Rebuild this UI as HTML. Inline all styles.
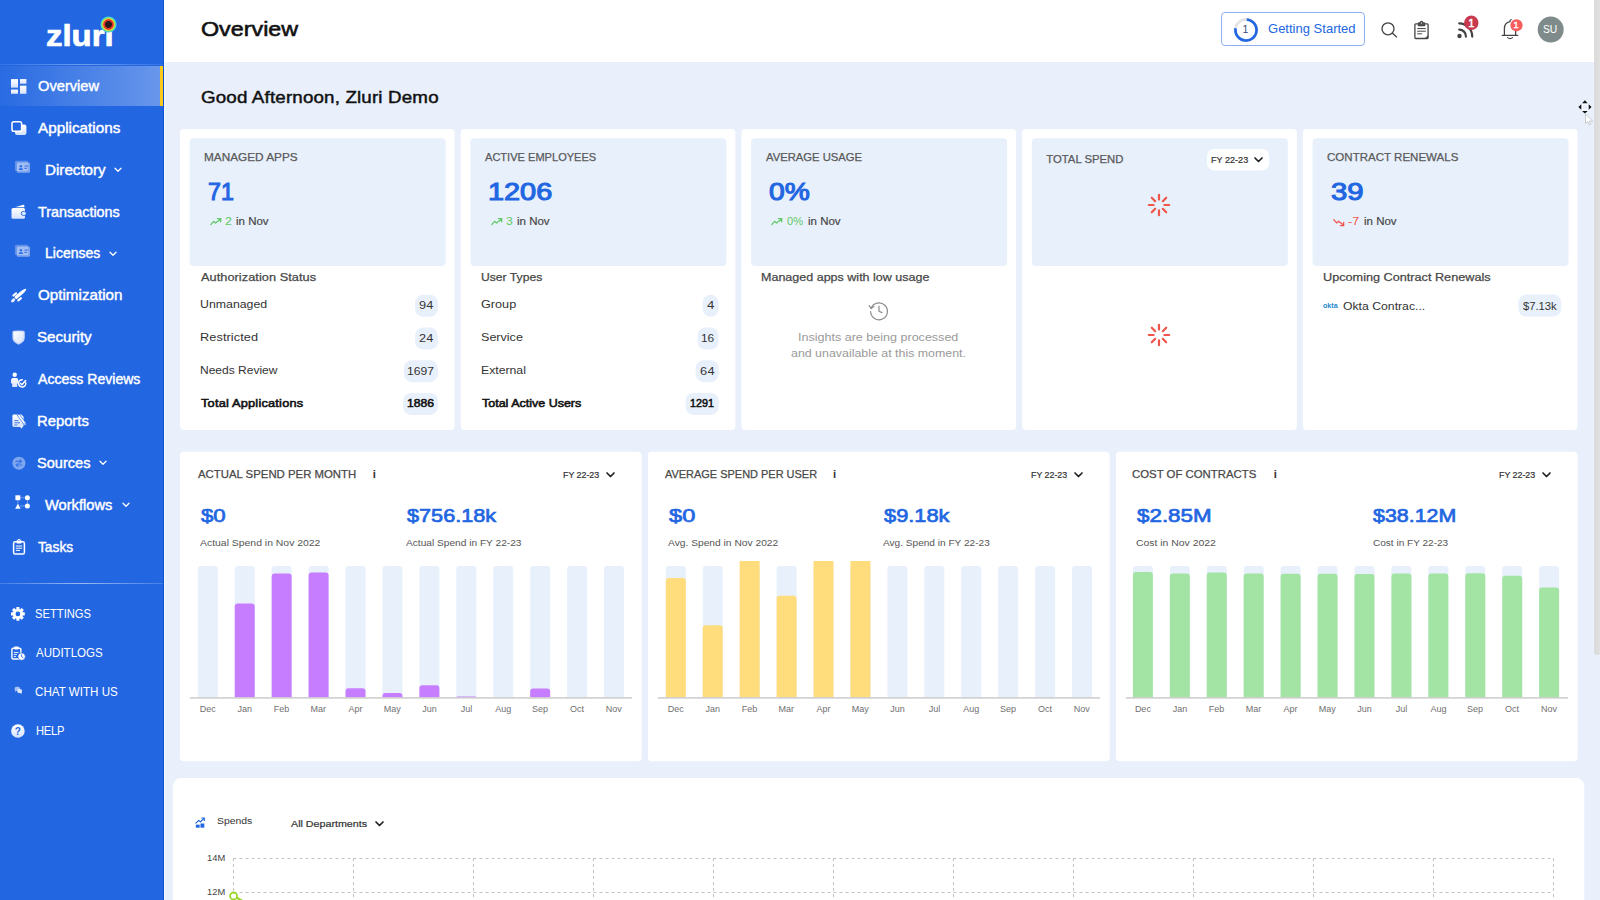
<!DOCTYPE html>
<html lang="en"><head><meta charset="utf-8"><title>Overview - Zluri</title>
<style>

*{box-sizing:border-box;margin:0;padding:0}
html,body{width:1600px;height:900px;overflow:hidden;background:#E9F0FC;font-family:"Liberation Sans", sans-serif;}
.t{position:absolute;white-space:nowrap;transform-origin:0 50%;}
.abs{position:absolute}
#side{position:absolute;left:0;top:0;width:164px;height:900px;background:#2266E2;}
#head{position:absolute;left:164px;top:0;width:1436px;height:62px;background:#fff;}
svg{position:absolute;overflow:visible}

</style></head>
<body>
<svg style="left:0;top:0" width="1600" height="900" viewBox="0 0 1600 900"><rect x="180.00" y="129.07" width="274.67" height="300.93" rx="4" fill="#fff"/><rect x="189.70" y="138.13" width="255.97" height="127.90" rx="4" fill="#E8F0FC"/><rect x="460.72" y="129.07" width="274.67" height="300.93" rx="4" fill="#fff"/><rect x="470.42" y="138.13" width="255.97" height="127.90" rx="4" fill="#E8F0FC"/><rect x="741.44" y="129.07" width="274.67" height="300.93" rx="4" fill="#fff"/><rect x="751.14" y="138.13" width="255.97" height="127.90" rx="4" fill="#E8F0FC"/><rect x="1022.16" y="129.07" width="274.67" height="300.93" rx="4" fill="#fff"/><rect x="1031.86" y="138.13" width="255.97" height="127.90" rx="4" fill="#E8F0FC"/><rect x="1302.88" y="129.07" width="274.67" height="300.93" rx="4" fill="#fff"/><rect x="1312.58" y="138.13" width="255.97" height="127.90" rx="4" fill="#E8F0FC"/><rect x="1207.06" y="149.00" width="62.20" height="21.40" rx="7" fill="#fff"/><rect x="415.10" y="294.80" width="22.80" height="22.00" rx="8" fill="#E8F0FC"/><rect x="415.10" y="327.50" width="22.80" height="22.00" rx="8" fill="#E8F0FC"/><rect x="403.90" y="360.20" width="34.00" height="22.00" rx="8" fill="#E8F0FC"/><rect x="403.10" y="392.90" width="34.80" height="22.00" rx="8" fill="#E8F0FC"/><rect x="702.62" y="294.80" width="16.00" height="22.00" rx="8" fill="#E8F0FC"/><rect x="697.62" y="327.50" width="21.00" height="22.00" rx="8" fill="#E8F0FC"/><rect x="695.62" y="360.20" width="23.00" height="22.00" rx="8" fill="#E8F0FC"/><rect x="685.62" y="392.90" width="33.00" height="22.00" rx="8" fill="#E8F0FC"/><rect x="1518.28" y="294.60" width="43.00" height="22.00" rx="8" fill="#E8F0FC"/><rect x="180.00" y="451.80" width="461.70" height="309.40" rx="4" fill="#fff"/><path d="M197.80 697.80 V569.00 Q197.80 566.00 200.80 566.00 H214.80 Q217.80 566.00 217.80 569.00 V697.80 Z" fill="#E8F0FC"/><path d="M234.73 697.80 V569.00 Q234.73 566.00 237.73 566.00 H251.73 Q254.73 566.00 254.73 569.00 V697.80 Z" fill="#E8F0FC"/><path d="M234.73 697.80 V606.60 Q234.73 603.60 237.73 603.60 H251.73 Q254.73 603.60 254.73 606.60 V697.80 Z" fill="#C77DFF"/><path d="M271.66 697.80 V569.00 Q271.66 566.00 274.66 566.00 H288.66 Q291.66 566.00 291.66 569.00 V697.80 Z" fill="#E8F0FC"/><path d="M271.66 697.80 V576.50 Q271.66 573.50 274.66 573.50 H288.66 Q291.66 573.50 291.66 576.50 V697.80 Z" fill="#C77DFF"/><path d="M308.59 697.80 V569.00 Q308.59 566.00 311.59 566.00 H325.59 Q328.59 566.00 328.59 569.00 V697.80 Z" fill="#E8F0FC"/><path d="M308.59 697.80 V575.40 Q308.59 572.40 311.59 572.40 H325.59 Q328.59 572.40 328.59 575.40 V697.80 Z" fill="#C77DFF"/><path d="M345.52 697.80 V569.00 Q345.52 566.00 348.52 566.00 H362.52 Q365.52 566.00 365.52 569.00 V697.80 Z" fill="#E8F0FC"/><path d="M345.52 697.80 V691.30 Q345.52 688.30 348.52 688.30 H362.52 Q365.52 688.30 365.52 691.30 V697.80 Z" fill="#C77DFF"/><path d="M382.45 697.80 V569.00 Q382.45 566.00 385.45 566.00 H399.45 Q402.45 566.00 402.45 569.00 V697.80 Z" fill="#E8F0FC"/><path d="M382.45 697.80 V696.00 Q382.45 693.00 385.45 693.00 H399.45 Q402.45 693.00 402.45 696.00 V697.80 Z" fill="#C77DFF"/><path d="M419.38 697.80 V569.00 Q419.38 566.00 422.38 566.00 H436.38 Q439.38 566.00 439.38 569.00 V697.80 Z" fill="#E8F0FC"/><path d="M419.38 697.80 V688.30 Q419.38 685.30 422.38 685.30 H436.38 Q439.38 685.30 439.38 688.30 V697.80 Z" fill="#C77DFF"/><path d="M456.31 697.80 V569.00 Q456.31 566.00 459.31 566.00 H473.31 Q476.31 566.00 476.31 569.00 V697.80 Z" fill="#E8F0FC"/><path d="M456.31 697.80 V697.80 Q456.31 696.60 457.51 696.60 H475.11 Q476.31 696.60 476.31 697.80 V697.80 Z" fill="#C77DFF"/><path d="M493.24 697.80 V569.00 Q493.24 566.00 496.24 566.00 H510.24 Q513.24 566.00 513.24 569.00 V697.80 Z" fill="#E8F0FC"/><path d="M530.17 697.80 V569.00 Q530.17 566.00 533.17 566.00 H547.17 Q550.17 566.00 550.17 569.00 V697.80 Z" fill="#E8F0FC"/><path d="M530.17 697.80 V691.60 Q530.17 688.60 533.17 688.60 H547.17 Q550.17 688.60 550.17 691.60 V697.80 Z" fill="#C77DFF"/><path d="M567.10 697.80 V569.00 Q567.10 566.00 570.10 566.00 H584.10 Q587.10 566.00 587.10 569.00 V697.80 Z" fill="#E8F0FC"/><path d="M604.03 697.80 V569.00 Q604.03 566.00 607.03 566.00 H621.03 Q624.03 566.00 624.03 569.00 V697.80 Z" fill="#E8F0FC"/><rect x="189.80" y="697.10" width="442.20" height="1.60" fill="#cfcfcf"/><rect x="648.00" y="451.80" width="461.70" height="309.40" rx="4" fill="#fff"/><path d="M665.80 697.80 V569.00 Q665.80 566.00 668.80 566.00 H682.80 Q685.80 566.00 685.80 569.00 V697.80 Z" fill="#E8F0FC"/><path d="M665.80 697.80 V580.90 Q665.80 577.90 668.80 577.90 H682.80 Q685.80 577.90 685.80 580.90 V697.80 Z" fill="#FFDC7C"/><path d="M702.73 697.80 V569.00 Q702.73 566.00 705.73 566.00 H719.73 Q722.73 566.00 722.73 569.00 V697.80 Z" fill="#E8F0FC"/><path d="M702.73 697.80 V628.20 Q702.73 625.20 705.73 625.20 H719.73 Q722.73 625.20 722.73 628.20 V697.80 Z" fill="#FFDC7C"/><path d="M739.66 697.80 V569.00 Q739.66 566.00 742.66 566.00 H756.66 Q759.66 566.00 759.66 569.00 V697.80 Z" fill="#E8F0FC"/><path d="M739.66 697.80 V561.00 Q739.66 561.00 739.66 561.00 H759.66 Q759.66 561.00 759.66 561.00 V697.80 Z" fill="#FFDC7C"/><path d="M776.59 697.80 V569.00 Q776.59 566.00 779.59 566.00 H793.59 Q796.59 566.00 796.59 569.00 V697.80 Z" fill="#E8F0FC"/><path d="M776.59 697.80 V598.80 Q776.59 595.80 779.59 595.80 H793.59 Q796.59 595.80 796.59 598.80 V697.80 Z" fill="#FFDC7C"/><path d="M813.52 697.80 V569.00 Q813.52 566.00 816.52 566.00 H830.52 Q833.52 566.00 833.52 569.00 V697.80 Z" fill="#E8F0FC"/><path d="M813.52 697.80 V561.00 Q813.52 561.00 813.52 561.00 H833.52 Q833.52 561.00 833.52 561.00 V697.80 Z" fill="#FFDC7C"/><path d="M850.45 697.80 V569.00 Q850.45 566.00 853.45 566.00 H867.45 Q870.45 566.00 870.45 569.00 V697.80 Z" fill="#E8F0FC"/><path d="M850.45 697.80 V561.00 Q850.45 561.00 850.45 561.00 H870.45 Q870.45 561.00 870.45 561.00 V697.80 Z" fill="#FFDC7C"/><path d="M887.38 697.80 V569.00 Q887.38 566.00 890.38 566.00 H904.38 Q907.38 566.00 907.38 569.00 V697.80 Z" fill="#E8F0FC"/><path d="M924.31 697.80 V569.00 Q924.31 566.00 927.31 566.00 H941.31 Q944.31 566.00 944.31 569.00 V697.80 Z" fill="#E8F0FC"/><path d="M961.24 697.80 V569.00 Q961.24 566.00 964.24 566.00 H978.24 Q981.24 566.00 981.24 569.00 V697.80 Z" fill="#E8F0FC"/><path d="M998.17 697.80 V569.00 Q998.17 566.00 1001.17 566.00 H1015.17 Q1018.17 566.00 1018.17 569.00 V697.80 Z" fill="#E8F0FC"/><path d="M1035.10 697.80 V569.00 Q1035.10 566.00 1038.10 566.00 H1052.10 Q1055.10 566.00 1055.10 569.00 V697.80 Z" fill="#E8F0FC"/><path d="M1072.03 697.80 V569.00 Q1072.03 566.00 1075.03 566.00 H1089.03 Q1092.03 566.00 1092.03 569.00 V697.80 Z" fill="#E8F0FC"/><rect x="657.80" y="697.10" width="442.20" height="1.60" fill="#cfcfcf"/><rect x="1116.00" y="451.80" width="461.70" height="309.40" rx="4" fill="#fff"/><path d="M1132.90 697.80 V569.00 Q1132.90 566.00 1135.90 566.00 H1149.90 Q1152.90 566.00 1152.90 569.00 V697.80 Z" fill="#E8F0FC"/><path d="M1132.90 697.80 V575.00 Q1132.90 572.00 1135.90 572.00 H1149.90 Q1152.90 572.00 1152.90 575.00 V697.80 Z" fill="#A3E4A4"/><path d="M1169.83 697.80 V569.00 Q1169.83 566.00 1172.83 566.00 H1186.83 Q1189.83 566.00 1189.83 569.00 V697.80 Z" fill="#E8F0FC"/><path d="M1169.83 697.80 V576.50 Q1169.83 573.50 1172.83 573.50 H1186.83 Q1189.83 573.50 1189.83 576.50 V697.80 Z" fill="#A3E4A4"/><path d="M1206.76 697.80 V569.00 Q1206.76 566.00 1209.76 566.00 H1223.76 Q1226.76 566.00 1226.76 569.00 V697.80 Z" fill="#E8F0FC"/><path d="M1206.76 697.80 V575.40 Q1206.76 572.40 1209.76 572.40 H1223.76 Q1226.76 572.40 1226.76 575.40 V697.80 Z" fill="#A3E4A4"/><path d="M1243.69 697.80 V569.00 Q1243.69 566.00 1246.69 566.00 H1260.69 Q1263.69 566.00 1263.69 569.00 V697.80 Z" fill="#E8F0FC"/><path d="M1243.69 697.80 V576.60 Q1243.69 573.60 1246.69 573.60 H1260.69 Q1263.69 573.60 1263.69 576.60 V697.80 Z" fill="#A3E4A4"/><path d="M1280.62 697.80 V569.00 Q1280.62 566.00 1283.62 566.00 H1297.62 Q1300.62 566.00 1300.62 569.00 V697.80 Z" fill="#E8F0FC"/><path d="M1280.62 697.80 V576.80 Q1280.62 573.80 1283.62 573.80 H1297.62 Q1300.62 573.80 1300.62 576.80 V697.80 Z" fill="#A3E4A4"/><path d="M1317.55 697.80 V569.00 Q1317.55 566.00 1320.55 566.00 H1334.55 Q1337.55 566.00 1337.55 569.00 V697.80 Z" fill="#E8F0FC"/><path d="M1317.55 697.80 V576.80 Q1317.55 573.80 1320.55 573.80 H1334.55 Q1337.55 573.80 1337.55 576.80 V697.80 Z" fill="#A3E4A4"/><path d="M1354.48 697.80 V569.00 Q1354.48 566.00 1357.48 566.00 H1371.48 Q1374.48 566.00 1374.48 569.00 V697.80 Z" fill="#E8F0FC"/><path d="M1354.48 697.80 V577.00 Q1354.48 574.00 1357.48 574.00 H1371.48 Q1374.48 574.00 1374.48 577.00 V697.80 Z" fill="#A3E4A4"/><path d="M1391.41 697.80 V569.00 Q1391.41 566.00 1394.41 566.00 H1408.41 Q1411.41 566.00 1411.41 569.00 V697.80 Z" fill="#E8F0FC"/><path d="M1391.41 697.80 V576.50 Q1391.41 573.50 1394.41 573.50 H1408.41 Q1411.41 573.50 1411.41 576.50 V697.80 Z" fill="#A3E4A4"/><path d="M1428.34 697.80 V569.00 Q1428.34 566.00 1431.34 566.00 H1445.34 Q1448.34 566.00 1448.34 569.00 V697.80 Z" fill="#E8F0FC"/><path d="M1428.34 697.80 V576.50 Q1428.34 573.50 1431.34 573.50 H1445.34 Q1448.34 573.50 1448.34 576.50 V697.80 Z" fill="#A3E4A4"/><path d="M1465.27 697.80 V569.00 Q1465.27 566.00 1468.27 566.00 H1482.27 Q1485.27 566.00 1485.27 569.00 V697.80 Z" fill="#E8F0FC"/><path d="M1465.27 697.80 V576.30 Q1465.27 573.30 1468.27 573.30 H1482.27 Q1485.27 573.30 1485.27 576.30 V697.80 Z" fill="#A3E4A4"/><path d="M1502.20 697.80 V569.00 Q1502.20 566.00 1505.20 566.00 H1519.20 Q1522.20 566.00 1522.20 569.00 V697.80 Z" fill="#E8F0FC"/><path d="M1502.20 697.80 V578.70 Q1502.20 575.70 1505.20 575.70 H1519.20 Q1522.20 575.70 1522.20 578.70 V697.80 Z" fill="#A3E4A4"/><path d="M1539.13 697.80 V569.00 Q1539.13 566.00 1542.13 566.00 H1556.13 Q1559.13 566.00 1559.13 569.00 V697.80 Z" fill="#E8F0FC"/><path d="M1539.13 697.80 V590.40 Q1539.13 587.40 1542.13 587.40 H1556.13 Q1559.13 587.40 1559.13 590.40 V697.80 Z" fill="#A3E4A4"/><rect x="1125.80" y="697.10" width="442.20" height="1.60" fill="#cfcfcf"/><rect x="173.00" y="778.10" width="1411.30" height="140.00" rx="8" fill="#fff"/></svg>
<div id="side">
<div class="t" style="left:46.16px;top:21px;color:#fff;font-size:30.2px;line-height:30.2px;font-weight:700;-webkit-text-stroke:0.7px #fff;transform:scaleX(1.0913);">zluri</div>
<div class="abs" style="left:99.9px;top:15.8px;width:17px;height:17px;border-radius:50%;background:radial-gradient(circle closest-side,#2a1c1c 0 36%,#e6332a 45% 57%,#f9d43a 67%,#7be05a 78%,#3fd0f0 89%,rgba(63,208,240,0) 100%)"></div>
<div class="abs" style="left:0;top:64px;width:164px;height:1px;background:linear-gradient(90deg,rgba(255,255,255,.08),rgba(255,255,255,.35) 50%,rgba(255,255,255,.08))"></div>
<div class="abs" style="left:0;top:66px;width:164px;height:40px;background:linear-gradient(90deg,rgba(255,255,255,.03),rgba(255,255,255,.32))"></div>
<div class="abs" style="left:160px;top:66px;width:3.2px;height:40px;background:#FFC91A"></div>
<div class="t" style="left:37.55px;top:80px;color:#fff;font-size:13.9px;line-height:13.9px;-webkit-text-stroke:0.4px #fff;transform:scaleX(1.0550);">Overview</div>
<div class="t" style="left:37.64px;top:122px;color:#fff;font-size:13.9px;line-height:13.9px;-webkit-text-stroke:0.4px #fff;transform:scaleX(1.0993);">Applications</div>
<div class="t" style="left:44.73px;top:164px;color:#fff;font-size:13.9px;line-height:13.9px;-webkit-text-stroke:0.4px #fff;transform:scaleX(1.0922);">Directory</div>
<svg style="left:114.4px;top:167.0px" width="8" height="6" viewBox="0 0 8 6"><path d="M1 1.2 L4 4.2 L7 1.2" fill="none" stroke="#fff" stroke-width="1.3" stroke-linecap="round" stroke-linejoin="round"/></svg>
<div class="t" style="left:38.00px;top:206px;color:#fff;font-size:13.9px;line-height:13.9px;-webkit-text-stroke:0.4px #fff;transform:scaleX(1.0347);">Transactions</div>
<div class="t" style="left:44.85px;top:247px;color:#fff;font-size:13.9px;line-height:13.9px;-webkit-text-stroke:0.4px #fff;transform:scaleX(1.0085);">Licenses</div>
<svg style="left:109.0px;top:250.8px" width="8" height="6" viewBox="0 0 8 6"><path d="M1 1.2 L4 4.2 L7 1.2" fill="none" stroke="#fff" stroke-width="1.3" stroke-linecap="round" stroke-linejoin="round"/></svg>
<div class="t" style="left:37.52px;top:289px;color:#fff;font-size:13.9px;line-height:13.9px;-webkit-text-stroke:0.4px #fff;transform:scaleX(1.0936);">Optimization</div>
<div class="t" style="left:37.15px;top:331px;color:#fff;font-size:13.9px;line-height:13.9px;-webkit-text-stroke:0.4px #fff;transform:scaleX(1.0895);">Security</div>
<div class="t" style="left:37.80px;top:373px;color:#fff;font-size:13.9px;line-height:13.9px;-webkit-text-stroke:0.4px #fff;transform:scaleX(1.0127);">Access Reviews</div>
<div class="t" style="left:37.32px;top:415px;color:#fff;font-size:13.9px;line-height:13.9px;-webkit-text-stroke:0.4px #fff;transform:scaleX(1.0646);">Reports</div>
<div class="t" style="left:37.21px;top:457px;color:#fff;font-size:13.9px;line-height:13.9px;-webkit-text-stroke:0.4px #fff;transform:scaleX(1.0499);">Sources</div>
<svg style="left:99.4px;top:460.3px" width="8" height="6" viewBox="0 0 8 6"><path d="M1 1.2 L4 4.2 L7 1.2" fill="none" stroke="#fff" stroke-width="1.3" stroke-linecap="round" stroke-linejoin="round"/></svg>
<div class="t" style="left:45.48px;top:499px;color:#fff;font-size:13.9px;line-height:13.9px;-webkit-text-stroke:0.4px #fff;transform:scaleX(1.0561);">Workflows</div>
<svg style="left:121.6px;top:502.2px" width="8" height="6" viewBox="0 0 8 6"><path d="M1 1.2 L4 4.2 L7 1.2" fill="none" stroke="#fff" stroke-width="1.3" stroke-linecap="round" stroke-linejoin="round"/></svg>
<div class="t" style="left:37.83px;top:541px;color:#fff;font-size:13.9px;line-height:13.9px;-webkit-text-stroke:0.4px #fff;transform:scaleX(0.9892);">Tasks</div>
<div class="abs" style="left:0;top:583px;width:164px;height:1px;background:linear-gradient(90deg,rgba(255,255,255,.15),rgba(255,255,255,.55) 50%,rgba(255,255,255,.15))"></div>
<div class="t" style="left:35.35px;top:608px;color:#fff;font-size:12px;line-height:12px;transform:scaleX(0.9335);">SETTINGS</div>
<div class="t" style="left:35.79px;top:647px;color:#fff;font-size:12px;line-height:12px;transform:scaleX(0.9623);">AUDITLOGS</div>
<div class="t" style="left:35.46px;top:686px;color:#fff;font-size:12px;line-height:12px;transform:scaleX(0.9687);">CHAT WITH US</div>
<div class="t" style="left:35.86px;top:725px;color:#fff;font-size:12px;line-height:12px;letter-spacing:-0.295px;transform:scaleX(0.9300);">HELP</div>
<svg style="left:0;top:0" width="164" height="900" viewBox="0 0 164 900"><defs><linearGradient id="wg" x1="0" y1="0" x2="0" y2="1"><stop offset="0" stop-color="#fff"/><stop offset="1" stop-color="#d6e2fa"/></linearGradient><linearGradient id="sg" x1="0" y1="0" x2="1" y2="1"><stop offset="0" stop-color="#fff"/><stop offset="1" stop-color="#d3e0f9"/></linearGradient></defs>
<g fill="url(#wg)"><rect x="11" y="79.1" width="7" height="8.5"/><rect x="20" y="79.1" width="6.4" height="4.6"/><rect x="11" y="89.6" width="7" height="4.2"/><rect x="20" y="85.7" width="6.4" height="8.1"/></g>
<rect x="15" y="124.6" width="11.4" height="10.4" rx="2" fill="url(#wg)"/><rect x="12" y="121.7" width="9.6" height="9.6" rx="1.8" fill="#2266E2" stroke="#fff" stroke-width="1.5"/>
<rect x="14.9" y="160.8" width="13.2" height="10.3" rx="1.3" fill="rgba(255,255,255,.28)"/><rect x="16.8" y="162.4" width="13.2" height="10.3" rx="1.3" fill="rgba(255,255,255,.42)"/><circle cx="20.9" cy="166.20000000000002" r="1.25" fill="#2f6fe6"/><path d="M18.7 170.10000000000002 a2.2 2 0 0 1 4.4 0 z" fill="#2f6fe6"/><rect x="24.4" y="165.5" width="3.8" height="1" fill="#2f6fe6"/><rect x="24.4" y="167.8" width="2.6" height="1" fill="#2f6fe6"/>
<rect x="14.9" y="244.8" width="13.2" height="10.3" rx="1.3" fill="rgba(255,255,255,.28)"/><rect x="16.8" y="246.4" width="13.2" height="10.3" rx="1.3" fill="rgba(255,255,255,.42)"/><circle cx="20.9" cy="250.20000000000002" r="1.25" fill="#2f6fe6"/><path d="M18.7 254.10000000000002 a2.2 2 0 0 1 4.4 0 z" fill="#2f6fe6"/><rect x="24.4" y="249.5" width="3.8" height="1" fill="#2f6fe6"/><rect x="24.4" y="251.8" width="2.6" height="1" fill="#2f6fe6"/>
<path d="M15 207.2 L23.2 204.7 Q24.2 204.4 24.3 205.5 L24.4 207.2 Z" fill="#fff"/><rect x="11.5" y="208" width="13.5" height="10.8" rx="1.6" fill="url(#wg)"/><rect x="21.3" y="211.3" width="5" height="4.2" rx="2.1" fill="#dce8ff" stroke="#2266E2" stroke-width=".9"/>
<g transform="translate(20.55 293.65) rotate(49.5)" fill="#fff"><path d="M0 -7.6 C1.5 -5.6 1.65 -3.4 1.65 -1 V6 Q1.65 7.2 0 7.2 Q-1.65 7.2 -1.65 6 V-1 C-1.65 -3.4 -1.5 -5.6 0 -7.6 Z"/><rect x="-4.3" y="2.1" width="2.2" height="5.6" rx="1.1"/><rect x="2.6" y="1.6" width="2.2" height="5.6" rx="1.1"/><ellipse cx="0.3" cy="10" rx="1.5" ry="2.4" fill="#e9f0ff"/></g>
<path d="M12.4 332.2 Q12.4 330.8 13.8 330.7 Q18.6 330.2 23.4 330.7 Q24.8 330.8 24.8 332.2 V337.4 Q24.8 342 18.6 344.7 Q12.4 342 12.4 337.4 Z" fill="#c3d4f6"/><path d="M13.6 332.6 Q13.6 331.8 14.4 331.7 Q18.6 331.3 22.8 331.7 Q23.6 331.8 23.6 332.6 V337.3 Q23.6 341 18.6 343.3 Q13.6 341 13.6 337.3 Z" fill="url(#sg)"/>
<circle cx="14.7" cy="374.7" r="2.2" fill="#fff"/><path d="M11.1 380 Q11.1 378 13.1 378 H16.3 Q18.3 378 18.3 380 V383.4 H17.2 V387 H12.2 V383.4 H11.1 Z" fill="url(#wg)"/><circle cx="22.1" cy="383.4" r="3.6" fill="none" stroke="#fff" stroke-width="1.5" stroke-dasharray="18.5 4" transform="rotate(-20 22.1 383.2)"/><path d="M20.4 383.3 L21.9 384.8 L25.6 380.6" fill="none" stroke="#fff" stroke-width="1.5" stroke-linecap="round" stroke-linejoin="round"/>
<path d="M12.4 415.8 Q12.4 414.4 13.8 414.4 H21.2 L23.6 416.8 V425.6 Q23.6 427 22.2 427 H13.8 Q12.4 427 12.4 425.6 Z" fill="url(#wg)"/><g stroke="#2b6be4" stroke-width=".9"><path d="M14.4 420.6 H18.4 M14.4 422.8 H20 M14.4 425 H17.4"/></g><path d="M17.2 415.2 L19.2 414.2 L25.6 422.6 L23.6 424 Z" fill="#fff" stroke="#2266E2" stroke-width=".7"/><path d="M20.2 427.2 L22 428.8 L22.4 426.2 Z" fill="#fff"/><path d="M23.6 424 L25.6 422.6 L25.4 425.6 Z" fill="#dbe6fb"/>
<circle cx="18.9" cy="463.2" r="6.5" fill="rgba(255,255,255,.42)"/><g fill="none" stroke="#3a76e8" stroke-width="1.2" stroke-linecap="round" stroke-linejoin="round"><path d="M16 461.4 H21.4 M19.8 459.8 L21.6 461.4 L19.8 463"/><path d="M21.8 465 H16.4 M18 463.4 L16.2 465 L18 466.6"/></g>
<g stroke="rgba(255,255,255,.4)" stroke-width=".9"><path d="M20 497.7 H25 M17.8 500 V503.6 M20 506 H25 M27.4 500 V503.6"/></g><rect x="15.4" y="495.3" width="4.9" height="4.9" fill="#fff"/><circle cx="27.4" cy="497.7" r="2.5" fill="#fff"/><path d="M17.9 503.5 L20.6 508.7 H15.2 Z" fill="#fff"/><circle cx="27.4" cy="506" r="2.5" fill="#fff"/>
<rect x="13.6" y="541.8" width="10.8" height="12.2" rx="1.6" fill="none" stroke="#fff" stroke-width="1.5"/><rect x="16.4" y="540.2" width="5.2" height="3.2" rx="1" fill="#fff"/><circle cx="19" cy="540.3" r="1.5" fill="#fff"/><circle cx="19" cy="540.4" r=".6" fill="#2266E2"/><g stroke="#fff" stroke-width="1"><path d="M15.8 546 H22.2 M15.8 548.2 H22.2 M15.8 550.4 H20"/></g>
<g transform="translate(17.9 613.9)" fill="#fff"><rect x="-1.55" y="-6.9" width="3.1" height="3.4" rx=".5" transform="rotate(0)"/><rect x="-1.55" y="-6.9" width="3.1" height="3.4" rx=".5" transform="rotate(45)"/><rect x="-1.55" y="-6.9" width="3.1" height="3.4" rx=".5" transform="rotate(90)"/><rect x="-1.55" y="-6.9" width="3.1" height="3.4" rx=".5" transform="rotate(135)"/><rect x="-1.55" y="-6.9" width="3.1" height="3.4" rx=".5" transform="rotate(180)"/><rect x="-1.55" y="-6.9" width="3.1" height="3.4" rx=".5" transform="rotate(225)"/><rect x="-1.55" y="-6.9" width="3.1" height="3.4" rx=".5" transform="rotate(270)"/><rect x="-1.55" y="-6.9" width="3.1" height="3.4" rx=".5" transform="rotate(315)"/><circle r="5" /><circle r="2.35" fill="#2266E2"/></g>
<rect x="11.9" y="648.2" width="9" height="10.8" rx="1.3" fill="none" stroke="#fff" stroke-width="1.4"/><rect x="14" y="646.4" width="4.8" height="3" rx=".9" fill="#fff"/><g stroke="#fff" stroke-width=".9"><path d="M13.8 652.4 H18.6 M13.8 654.4 H17 M13.8 656.4 H16"/></g><circle cx="21.6" cy="656.6" r="3.7" fill="#fff" stroke="#2266E2" stroke-width=".6"/><path d="M21.6 654.6 V656.8 L23 657.6" fill="none" stroke="#2266E2" stroke-width=".8" stroke-linecap="round"/>
<g fill="rgba(255,255,255,.6)"><path d="M14.6 688.4 Q14.6 686.8 16.4 686.8 H18.2 Q20 686.8 20 688.4 V689.2 Q20 690.8 18.2 690.8 H16.6 L15.2 692 V690.6 Q14.6 690.2 14.6 689.2 Z"/><path d="M17.4 690.4 Q17.4 689.2 18.8 689.2 H20.6 Q22 689.2 22 690.6 V691.6 Q22 692.8 21.4 693 V694.2 L20 693 H18.8 Q17.4 693 17.4 691.8 Z" fill="rgba(255,255,255,.85)"/></g>
<circle cx="17.9" cy="731" r="6.8" fill="url(#wg)"/>
</svg>
<div class="t" style="left:14.73px;top:727px;color:#2266E2;font-size:10px;line-height:10px;font-weight:700;">?</div>
</div>
<div id="head"></div>
<div class="abs" style="left:163px;top:0;width:1px;height:900px;background:#0F54D4"></div><div class="abs" style="left:164px;top:62px;width:2px;height:838px;background:linear-gradient(90deg,rgba(255,255,255,.5),rgba(255,255,255,.1))"></div>
<div class="t" style="left:200.99px;top:18px;color:#111;font-size:21px;line-height:21px;-webkit-text-stroke:0.6px #111;transform:scaleX(1.1096);">Overview</div>
<div class="abs" style="left:1221px;top:12px;width:144px;height:34px;border:1px solid #8fb0ec;border-radius:4px;background:#fff"></div>
<div class="t" style="left:1268.30px;top:23px;color:#2266E2;font-size:12.2px;line-height:12.2px;transform:scaleX(1.0686);">Getting Started</div>
<svg style="left:1232px;top:16px" width="28" height="28" viewBox="-14 -14 28 28"><circle r="10.6" fill="none" stroke="#e4e4e4" stroke-width="2.6"/><circle r="10.6" fill="none" stroke="#2266E2" stroke-width="2.6" stroke-dasharray="50.62 100" transform="rotate(-86)"/></svg>
<div class="t" style="left:1242.62px;top:24px;color:#3a4a7a;font-size:10.5px;line-height:10.5px;">1</div>
<svg style="left:1370px;top:8px" width="230" height="46" viewBox="1370 8 230 46"><g fill="none" stroke="#444" stroke-linecap="round" stroke-linejoin="round"><circle cx="1388" cy="28.8" r="6" stroke-width="1.35"/><path d="M1392.5 33.2 L1396.6 36.9" stroke-width="1.35"/><path d="M1418.4 23.8 H1415.8 Q1414.9 23.8 1414.9 24.7 V37.6 Q1414.9 38.5 1415.8 38.5 H1427.2 Q1428.1 38.5 1428.1 37.6 V24.7 Q1428.1 23.8 1427.2 23.8 H1424.6" stroke-width="1.3"/><path d="M1418.4 25.6 V23.4 Q1418.4 22.8 1419 22.8 H1420.2 Q1420.4 21.3 1421.5 21.3 Q1422.6 21.3 1422.8 22.8 H1424 Q1424.6 22.8 1424.6 23.4 V25.6 Z" stroke-width="1.1" fill="#555"/><circle cx="1421.5" cy="23" r=".6" fill="#fff" stroke="none"/><path d="M1417.6 28.6 H1425.4 M1417.6 31.2 H1425.4 M1417.6 33.8 H1421.6" stroke-width="1"/><path d="M1459.2 29.6 A6.6 6.6 0 0 1 1465.9 36.6" stroke-width="2.2"/><path d="M1459.2 23.3 A13 13 0 0 1 1472.2 36.6" stroke-width="2.2"/><path d="M1502.2 35.3 H1517.8 M1504.4 35.3 V28.6 Q1504.4 22.6 1510 21.6 Q1510 19.6 1511.2 19.6 M1515.6 35.3 V31.5" stroke-width="1.3"/><path d="M1507.6 37.6 Q1510 39.6 1512.4 37.6" stroke-width="1.2"/></g><path d="M1428 38.4 L1424.8 38.4 L1428 35.2 Z" fill="#444"/><circle cx="1459.5" cy="36" r="2.2" fill="#444"/><circle cx="1471.3" cy="22.8" r="7.2" fill="#C8394E"/><circle cx="1516.5" cy="25.3" r="6.1" fill="#F65D5D"/><circle cx="1550.7" cy="29.6" r="13" fill="#7E8B8A"/></svg>
<div class="t" style="left:1468.25px;top:18px;color:#fff;font-size:11px;line-height:11px;-webkit-text-stroke:0.5px #fff;">1</div>
<div class="t" style="left:1513.55px;top:21px;color:#fff;font-size:9px;line-height:9px;-webkit-text-stroke:0.4px #fff;">1</div>
<div class="t" style="left:1543.49px;top:25px;color:#fff;font-size:10px;line-height:10px;transform:scaleX(1.0289);">SU</div>
<div class="t" style="left:200.88px;top:90px;color:#111;font-size:16.6px;line-height:16.6px;letter-spacing:0.146px;-webkit-text-stroke:0.45px #111;transform:scaleX(1.1300);">Good Afternoon, Zluri Demo</div>
<div class="t" style="left:203.89px;top:152px;color:#5a5a5a;font-size:11.3px;line-height:11.3px;-webkit-text-stroke:0.25px #5a5a5a;transform:scaleX(1.0439);">MANAGED APPS</div>
<div class="t" style="left:208.02px;top:180px;color:#2266E2;font-size:24.8px;line-height:24.8px;-webkit-text-stroke:1.1px #2266E2;transform:scaleX(0.9393);">71</div>
<svg style="left:210.0px;top:217px" width="12" height="9" viewBox="0 0 12 9"><path d="M.8 7.6 L3.6 4.3 L5.6 6 L10.4 2.2 M7.4 1.6 L10.8 1.6 L10.6 4.9" fill="none" stroke="#5FC966" stroke-width="1.25" stroke-linecap="round" stroke-linejoin="round"/></svg>
<div class="t" style="left:225.32px;top:216px;color:#5FC966;font-size:11px;line-height:11px;transform:scaleX(1.1283);">2</div>
<div class="t" style="left:236.31px;top:216px;color:#484848;font-size:11px;line-height:11px;-webkit-text-stroke:0.2px #484848;transform:scaleX(1.0452);">in Nov</div>
<div class="t" style="left:485.10px;top:152px;color:#5a5a5a;font-size:11.3px;line-height:11.3px;-webkit-text-stroke:0.25px #5a5a5a;transform:scaleX(0.9789);">ACTIVE EMPLOYEES</div>
<div class="t" style="left:487.66px;top:180px;color:#2266E2;font-size:24.8px;line-height:24.8px;-webkit-text-stroke:1.1px #2266E2;transform:scaleX(1.1638);">1206</div>
<svg style="left:490.72px;top:217px" width="12" height="9" viewBox="0 0 12 9"><path d="M.8 7.6 L3.6 4.3 L5.6 6 L10.4 2.2 M7.4 1.6 L10.8 1.6 L10.6 4.9" fill="none" stroke="#5FC966" stroke-width="1.25" stroke-linecap="round" stroke-linejoin="round"/></svg>
<div class="t" style="left:505.98px;top:216px;color:#5FC966;font-size:11px;line-height:11px;transform:scaleX(1.1105);">3</div>
<div class="t" style="left:517.03px;top:216px;color:#484848;font-size:11px;line-height:11px;-webkit-text-stroke:0.2px #484848;transform:scaleX(1.0452);">in Nov</div>
<div class="t" style="left:765.82px;top:152px;color:#5a5a5a;font-size:11.3px;line-height:11.3px;-webkit-text-stroke:0.25px #5a5a5a;transform:scaleX(0.9958);">AVERAGE USAGE</div>
<div class="t" style="left:769.49px;top:180px;color:#2266E2;font-size:24.8px;line-height:24.8px;-webkit-text-stroke:1.1px #2266E2;transform:scaleX(1.1360);">0%</div>
<svg style="left:771.44px;top:217px" width="12" height="9" viewBox="0 0 12 9"><path d="M.8 7.6 L3.6 4.3 L5.6 6 L10.4 2.2 M7.4 1.6 L10.8 1.6 L10.6 4.9" fill="none" stroke="#5FC966" stroke-width="1.25" stroke-linecap="round" stroke-linejoin="round"/></svg>
<div class="t" style="left:786.90px;top:216px;color:#5FC966;font-size:11px;line-height:11px;transform:scaleX(1.0076);">0%</div>
<div class="t" style="left:808.05px;top:216px;color:#484848;font-size:11px;line-height:11px;-webkit-text-stroke:0.2px #484848;transform:scaleX(1.0452);">in Nov</div>
<div class="t" style="left:1327.00px;top:152px;color:#5a5a5a;font-size:11.3px;line-height:11.3px;-webkit-text-stroke:0.25px #5a5a5a;transform:scaleX(1.0210);">CONTRACT RENEWALS</div>
<div class="t" style="left:1330.90px;top:180px;color:#2266E2;font-size:24.8px;line-height:24.8px;-webkit-text-stroke:1.1px #2266E2;transform:scaleX(1.1798);">39</div>
<svg style="left:1332.88px;top:218px" width="12" height="9" viewBox="0 0 12 9"><path d="M.8 1.6 L3.6 4.9 L5.6 3.2 L10.4 7 M7.4 7.6 L10.8 7.6 L10.6 4.3" fill="none" stroke="#F0554A" stroke-width="1.25" stroke-linecap="round" stroke-linejoin="round"/></svg>
<div class="t" style="left:1348.20px;top:216px;color:#F0554A;font-size:11px;line-height:11px;letter-spacing:0.061px;transform:scaleX(1.1300);">-7</div>
<div class="t" style="left:1363.69px;top:216px;color:#484848;font-size:11px;line-height:11px;-webkit-text-stroke:0.2px #484848;transform:scaleX(1.0452);">in Nov</div>
<div class="t" style="left:1046.33px;top:154px;color:#5a5a5a;font-size:11.3px;line-height:11.3px;-webkit-text-stroke:0.25px #5a5a5a;">TOTAL SPEND</div>
<div class="t" style="left:1211.38px;top:156px;color:#333;font-size:8.3px;line-height:8.3px;-webkit-text-stroke:0.2px #333;transform:scaleX(1.0947);">FY 22-23</div>
<svg style="left:1254.0600000000002px;top:157.3px" width="9" height="6" viewBox="0 0 9 6"><path d="M1 1 L4.5 4.5 L8 1" fill="none" stroke="#222" stroke-width="1.7" stroke-linecap="round" stroke-linejoin="round"/></svg>
<svg style="left:1147.3600000000001px;top:192.7px" width="24" height="24" viewBox="-12 -12 24 24"><line x1="0.00" y1="-5.40" x2="0.00" y2="-10.20" stroke="#F0554A" stroke-width="2.2" stroke-linecap="round"/><line x1="3.82" y1="-3.82" x2="7.21" y2="-7.21" stroke="#F0554A" stroke-width="2.2" stroke-linecap="round"/><line x1="5.40" y1="0.00" x2="10.20" y2="0.00" stroke="#F0554A" stroke-width="2.2" stroke-linecap="round"/><line x1="3.82" y1="3.82" x2="7.21" y2="7.21" stroke="#F0554A" stroke-width="2.2" stroke-linecap="round"/><line x1="0.00" y1="5.40" x2="0.00" y2="10.20" stroke="#F0554A" stroke-width="2.2" stroke-linecap="round"/><line x1="-3.82" y1="3.82" x2="-7.21" y2="7.21" stroke="#F0554A" stroke-width="2.2" stroke-linecap="round"/><line x1="-5.40" y1="0.00" x2="-10.20" y2="0.00" stroke="#F0554A" stroke-width="2.2" stroke-linecap="round"/><line x1="-3.82" y1="-3.82" x2="-7.21" y2="-7.21" stroke="#F0554A" stroke-width="2.2" stroke-linecap="round"/></svg>
<svg style="left:1147.3600000000001px;top:322.9px" width="24" height="24" viewBox="-12 -12 24 24"><line x1="0.00" y1="-5.40" x2="0.00" y2="-10.20" stroke="#F0554A" stroke-width="2.2" stroke-linecap="round"/><line x1="3.82" y1="-3.82" x2="7.21" y2="-7.21" stroke="#F0554A" stroke-width="2.2" stroke-linecap="round"/><line x1="5.40" y1="0.00" x2="10.20" y2="0.00" stroke="#F0554A" stroke-width="2.2" stroke-linecap="round"/><line x1="3.82" y1="3.82" x2="7.21" y2="7.21" stroke="#F0554A" stroke-width="2.2" stroke-linecap="round"/><line x1="0.00" y1="5.40" x2="0.00" y2="10.20" stroke="#F0554A" stroke-width="2.2" stroke-linecap="round"/><line x1="-3.82" y1="3.82" x2="-7.21" y2="7.21" stroke="#F0554A" stroke-width="2.2" stroke-linecap="round"/><line x1="-5.40" y1="0.00" x2="-10.20" y2="0.00" stroke="#F0554A" stroke-width="2.2" stroke-linecap="round"/><line x1="-3.82" y1="-3.82" x2="-7.21" y2="-7.21" stroke="#F0554A" stroke-width="2.2" stroke-linecap="round"/></svg>
<div class="t" style="left:200.65px;top:272px;color:#484848;font-size:11.3px;line-height:11.3px;letter-spacing:0.037px;-webkit-text-stroke:0.25px #484848;transform:scaleX(1.1300);">Authorization Status</div>
<div class="t" style="left:200.30px;top:299px;color:#333;font-size:11.3px;line-height:11.3px;transform:scaleX(1.0911);">Unmanaged</div>
<div class="t" style="left:419.06px;top:300px;color:#333;font-size:11.3px;line-height:11.3px;letter-spacing:0.237px;transform:scaleX(1.1300);">94</div>
<div class="t" style="left:199.97px;top:332px;color:#333;font-size:11.3px;line-height:11.3px;letter-spacing:0.061px;transform:scaleX(1.1300);">Restricted</div>
<div class="t" style="left:419.06px;top:333px;color:#333;font-size:11.3px;line-height:11.3px;letter-spacing:0.233px;transform:scaleX(1.1300);">24</div>
<div class="t" style="left:200.02px;top:365px;color:#333;font-size:11.3px;line-height:11.3px;transform:scaleX(1.0630);">Needs Review</div>
<div class="t" style="left:407.01px;top:366px;color:#333;font-size:11.3px;line-height:11.3px;transform:scaleX(1.0756);">1697</div>
<div class="t" style="left:201.01px;top:398px;color:#111;font-size:11.3px;line-height:11.3px;letter-spacing:0.182px;-webkit-text-stroke:0.55px #111;transform:scaleX(1.1300);">Total Applications</div>
<div class="t" style="left:406.87px;top:398px;color:#111;font-size:11.3px;line-height:11.3px;-webkit-text-stroke:0.55px #111;transform:scaleX(1.0756);">1886</div>
<div class="t" style="left:480.92px;top:272px;color:#484848;font-size:11.3px;line-height:11.3px;-webkit-text-stroke:0.25px #484848;transform:scaleX(1.0754);">User Types</div>
<div class="t" style="left:481.21px;top:299px;color:#333;font-size:11.3px;line-height:11.3px;transform:scaleX(1.1201);">Group</div>
<div class="t" style="left:706.96px;top:300px;color:#333;font-size:11.3px;line-height:11.3px;transform:scaleX(1.1689);">4</div>
<div class="t" style="left:481.10px;top:332px;color:#333;font-size:11.3px;line-height:11.3px;transform:scaleX(1.1117);">Service</div>
<div class="t" style="left:701.26px;top:333px;color:#333;font-size:11.3px;line-height:11.3px;transform:scaleX(1.0533);">16</div>
<div class="t" style="left:480.74px;top:365px;color:#333;font-size:11.3px;line-height:11.3px;transform:scaleX(1.0829);">External</div>
<div class="t" style="left:699.66px;top:366px;color:#333;font-size:11.3px;line-height:11.3px;letter-spacing:0.257px;transform:scaleX(1.1300);">64</div>
<div class="t" style="left:481.73px;top:398px;color:#111;font-size:11.3px;line-height:11.3px;-webkit-text-stroke:0.55px #111;transform:scaleX(1.1056);">Total Active Users</div>
<div class="t" style="left:690.06px;top:398px;color:#111;font-size:11.3px;line-height:11.3px;-webkit-text-stroke:0.55px #111;transform:scaleX(0.9512);">1291</div>
<div class="t" style="left:761.39px;top:272px;color:#484848;font-size:11.3px;line-height:11.3px;-webkit-text-stroke:0.25px #484848;transform:scaleX(1.1083);">Managed apps with low usage</div>
<svg style="left:868.44px;top:299.5px" width="22" height="22" viewBox="0 0 22 22"><path d="M3.2 8.2 A8.4 8.4 0 1 1 2.6 11.6" fill="none" stroke="#8c8c8c" stroke-width="1.2" stroke-linecap="round"/><path d="M1.2 5.6 L3.2 8.6 L6 6.4" fill="none" stroke="#8c8c8c" stroke-width="1.2" stroke-linecap="round" stroke-linejoin="round"/><path d="M11 6.2 V11.2 L14 12.6" fill="none" stroke="#8c8c8c" stroke-width="1.2" stroke-linecap="round" stroke-linejoin="round"/></svg>
<div class="t" style="left:798.15px;top:332px;color:#9a9a9a;font-size:11.3px;line-height:11.3px;transform:scaleX(1.1101);">Insights are being processed</div>
<div class="t" style="left:791.20px;top:348px;color:#9a9a9a;font-size:11.3px;line-height:11.3px;transform:scaleX(1.0972);">and unavailable at this moment.</div>
<div class="t" style="left:1323.24px;top:272px;color:#484848;font-size:11.3px;line-height:11.3px;-webkit-text-stroke:0.25px #484848;transform:scaleX(1.1216);">Upcoming Contract Renewals</div>
<div class="t" style="left:1322.62px;top:303px;color:#2688cc;font-size:6.5px;line-height:6.5px;font-weight:700;transform:scaleX(1.0940);">okta</div>
<div class="t" style="left:1342.63px;top:301px;color:#333;font-size:11.8px;line-height:11.8px;transform:scaleX(1.0362);">Okta Contrac...</div>
<div class="t" style="left:1522.90px;top:301px;color:#333;font-size:11.3px;line-height:11.3px;transform:scaleX(0.9934);">$7.13k</div>
<div class="t" style="left:197.68px;top:469px;color:#484848;font-size:11.3px;line-height:11.3px;-webkit-text-stroke:0.25px #484848;transform:scaleX(1.0070);">ACTUAL SPEND PER MONTH</div>
<div class="t" style="left:372.84px;top:469px;color:#333;font-size:11.3px;line-height:11.3px;font-weight:700;">i</div>
<div class="t" style="left:562.84px;top:471px;color:#333;font-size:8.3px;line-height:8.3px;-webkit-text-stroke:0.2px #333;transform:scaleX(1.0643);">FY 22-23</div>
<svg style="left:606.0px;top:472px" width="9" height="6" viewBox="0 0 9 6"><path d="M1 1 L4.5 4.5 L8 1" fill="none" stroke="#222" stroke-width="1.7" stroke-linecap="round" stroke-linejoin="round"/></svg>
<div class="t" style="left:201.18px;top:507px;color:#2266E2;font-size:18.5px;line-height:18.5px;-webkit-text-stroke:0.7px #2266E2;transform:scaleX(1.2018);">$0</div>
<div class="t" style="left:200.45px;top:538px;color:#555;font-size:9.6px;line-height:9.6px;transform:scaleX(1.0853);">Actual Spend in Nov 2022</div>
<div class="t" style="left:406.89px;top:507px;color:#2266E2;font-size:18.5px;line-height:18.5px;-webkit-text-stroke:0.7px #2266E2;transform:scaleX(1.1711);">$756.18k</div>
<div class="t" style="left:405.76px;top:538px;color:#555;font-size:9.6px;line-height:9.6px;transform:scaleX(1.0576);">Actual Spend in FY 22-23</div>
<div class="t" style="left:199.78px;top:705px;color:#707070;font-size:9px;line-height:9px;">Dec</div>
<div class="t" style="left:237.62px;top:705px;color:#707070;font-size:9px;line-height:9px;">Jan</div>
<div class="t" style="left:273.68px;top:705px;color:#707070;font-size:9px;line-height:9px;">Feb</div>
<div class="t" style="left:310.57px;top:705px;color:#707070;font-size:9px;line-height:9px;">Mar</div>
<div class="t" style="left:348.51px;top:705px;color:#707070;font-size:9px;line-height:9px;">Apr</div>
<div class="t" style="left:383.77px;top:705px;color:#707070;font-size:9px;line-height:9px;">May</div>
<div class="t" style="left:422.27px;top:705px;color:#707070;font-size:9px;line-height:9px;">Jun</div>
<div class="t" style="left:460.70px;top:705px;color:#707070;font-size:9px;line-height:9px;">Jul</div>
<div class="t" style="left:495.30px;top:705px;color:#707070;font-size:9px;line-height:9px;">Aug</div>
<div class="t" style="left:532.02px;top:705px;color:#707070;font-size:9px;line-height:9px;">Sep</div>
<div class="t" style="left:569.97px;top:705px;color:#707070;font-size:9px;line-height:9px;">Oct</div>
<div class="t" style="left:605.85px;top:705px;color:#707070;font-size:9px;line-height:9px;">Nov</div>
<div class="t" style="left:664.60px;top:469px;color:#484848;font-size:11.3px;line-height:11.3px;-webkit-text-stroke:0.25px #484848;transform:scaleX(0.9702);">AVERAGE SPEND PER USER</div>
<div class="t" style="left:833.04px;top:469px;color:#333;font-size:11.3px;line-height:11.3px;font-weight:700;">i</div>
<div class="t" style="left:1030.84px;top:471px;color:#333;font-size:8.3px;line-height:8.3px;-webkit-text-stroke:0.2px #333;transform:scaleX(1.0643);">FY 22-23</div>
<svg style="left:1074.0px;top:472px" width="9" height="6" viewBox="0 0 9 6"><path d="M1 1 L4.5 4.5 L8 1" fill="none" stroke="#222" stroke-width="1.7" stroke-linecap="round" stroke-linejoin="round"/></svg>
<div class="t" style="left:669.14px;top:507px;color:#2266E2;font-size:18.5px;line-height:18.5px;-webkit-text-stroke:0.7px #2266E2;transform:scaleX(1.2775);">$0</div>
<div class="t" style="left:668.46px;top:538px;color:#555;font-size:9.6px;line-height:9.6px;transform:scaleX(1.0671);">Avg. Spend in Nov 2022</div>
<div class="t" style="left:884.29px;top:507px;color:#2266E2;font-size:18.5px;line-height:18.5px;-webkit-text-stroke:0.7px #2266E2;transform:scaleX(1.1795);">$9.18k</div>
<div class="t" style="left:883.17px;top:538px;color:#555;font-size:9.6px;line-height:9.6px;transform:scaleX(1.0516);">Avg. Spend in FY 22-23</div>
<div class="t" style="left:667.78px;top:705px;color:#707070;font-size:9px;line-height:9px;">Dec</div>
<div class="t" style="left:705.62px;top:705px;color:#707070;font-size:9px;line-height:9px;">Jan</div>
<div class="t" style="left:741.68px;top:705px;color:#707070;font-size:9px;line-height:9px;">Feb</div>
<div class="t" style="left:778.57px;top:705px;color:#707070;font-size:9px;line-height:9px;">Mar</div>
<div class="t" style="left:816.51px;top:705px;color:#707070;font-size:9px;line-height:9px;">Apr</div>
<div class="t" style="left:851.77px;top:705px;color:#707070;font-size:9px;line-height:9px;">May</div>
<div class="t" style="left:890.27px;top:705px;color:#707070;font-size:9px;line-height:9px;">Jun</div>
<div class="t" style="left:928.70px;top:705px;color:#707070;font-size:9px;line-height:9px;">Jul</div>
<div class="t" style="left:963.30px;top:705px;color:#707070;font-size:9px;line-height:9px;">Aug</div>
<div class="t" style="left:1000.02px;top:705px;color:#707070;font-size:9px;line-height:9px;">Sep</div>
<div class="t" style="left:1037.97px;top:705px;color:#707070;font-size:9px;line-height:9px;">Oct</div>
<div class="t" style="left:1073.85px;top:705px;color:#707070;font-size:9px;line-height:9px;">Nov</div>
<div class="t" style="left:1132.44px;top:469px;color:#484848;font-size:11.3px;line-height:11.3px;-webkit-text-stroke:0.25px #484848;transform:scaleX(1.0068);">COST OF CONTRACTS</div>
<div class="t" style="left:1273.84px;top:469px;color:#333;font-size:11.3px;line-height:11.3px;font-weight:700;">i</div>
<div class="t" style="left:1498.84px;top:471px;color:#333;font-size:8.3px;line-height:8.3px;-webkit-text-stroke:0.2px #333;transform:scaleX(1.0643);">FY 22-23</div>
<svg style="left:1542.0px;top:472px" width="9" height="6" viewBox="0 0 9 6"><path d="M1 1 L4.5 4.5 L8 1" fill="none" stroke="#222" stroke-width="1.7" stroke-linecap="round" stroke-linejoin="round"/></svg>
<div class="t" style="left:1137.17px;top:507px;color:#2266E2;font-size:18.5px;line-height:18.5px;-webkit-text-stroke:0.7px #2266E2;transform:scaleX(1.2094);">$2.85M</div>
<div class="t" style="left:1136.27px;top:538px;color:#555;font-size:9.6px;line-height:9.6px;transform:scaleX(1.0855);">Cost in Nov 2022</div>
<div class="t" style="left:1373.10px;top:507px;color:#2266E2;font-size:18.5px;line-height:18.5px;-webkit-text-stroke:0.7px #2266E2;transform:scaleX(1.1562);">$38.12M</div>
<div class="t" style="left:1373.29px;top:538px;color:#555;font-size:9.6px;line-height:9.6px;transform:scaleX(1.0466);">Cost in FY 22-23</div>
<div class="t" style="left:1134.88px;top:705px;color:#707070;font-size:9px;line-height:9px;">Dec</div>
<div class="t" style="left:1172.72px;top:705px;color:#707070;font-size:9px;line-height:9px;">Jan</div>
<div class="t" style="left:1208.78px;top:705px;color:#707070;font-size:9px;line-height:9px;">Feb</div>
<div class="t" style="left:1245.67px;top:705px;color:#707070;font-size:9px;line-height:9px;">Mar</div>
<div class="t" style="left:1283.61px;top:705px;color:#707070;font-size:9px;line-height:9px;">Apr</div>
<div class="t" style="left:1318.87px;top:705px;color:#707070;font-size:9px;line-height:9px;">May</div>
<div class="t" style="left:1357.37px;top:705px;color:#707070;font-size:9px;line-height:9px;">Jun</div>
<div class="t" style="left:1395.80px;top:705px;color:#707070;font-size:9px;line-height:9px;">Jul</div>
<div class="t" style="left:1430.40px;top:705px;color:#707070;font-size:9px;line-height:9px;">Aug</div>
<div class="t" style="left:1467.12px;top:705px;color:#707070;font-size:9px;line-height:9px;">Sep</div>
<div class="t" style="left:1505.07px;top:705px;color:#707070;font-size:9px;line-height:9px;">Oct</div>
<div class="t" style="left:1540.95px;top:705px;color:#707070;font-size:9px;line-height:9px;">Nov</div>
<svg style="left:195.3px;top:816.6px" width="10.8" height="11.2" viewBox="0 0 13 13"><path d="M1 7.2 L4.6 3.8 L6.6 5.6 L10.6 1.6" fill="none" stroke="#2266E2" stroke-width="1.4" stroke-linecap="round" stroke-linejoin="round"/><path d="M8.2 1 H11.2 V4" fill="none" stroke="#2266E2" stroke-width="1.4" stroke-linecap="round" stroke-linejoin="round"/><rect x="1" y="9" width="4.6" height="3.6" fill="#2266E2"/><rect x="6.6" y="7.6" width="4.6" height="5" fill="#2266E2"/></svg>
<div class="t" style="left:217.08px;top:816px;color:#333;font-size:9.6px;line-height:9.6px;transform:scaleX(1.0851);">Spends</div>
<div class="t" style="left:291.49px;top:819px;color:#333;font-size:9.6px;line-height:9.6px;-webkit-text-stroke:0.2px #333;transform:scaleX(1.1149);">All Departments</div>
<svg style="left:374.5px;top:821px" width="9" height="6" viewBox="0 0 9 6"><path d="M1 1 L4.5 4.5 L8 1" fill="none" stroke="#222" stroke-width="1.7" stroke-linecap="round" stroke-linejoin="round"/></svg>
<div class="t" style="left:207.43px;top:853px;color:#444;font-size:9.8px;line-height:9.8px;transform:scaleX(0.9524);">14M</div>
<div class="t" style="left:207.43px;top:887px;color:#444;font-size:9.8px;line-height:9.8px;transform:scaleX(0.9524);">12M</div>
<svg style="left:0;top:0" width="1600" height="900" viewBox="0 0 1600 900"><line x1="233.5" y1="858.5" x2="1553.5" y2="858.5" stroke="#c4c4c4" stroke-width="1" stroke-dasharray="3 3"/><line x1="233.5" y1="892.5" x2="1553.5" y2="892.5" stroke="#c4c4c4" stroke-width="1" stroke-dasharray="3 3"/><line x1="233.5" y1="858" x2="233.5" y2="900" stroke="#c4c4c4" stroke-width="1" stroke-dasharray="3 3"/><line x1="353.5" y1="858" x2="353.5" y2="900" stroke="#c4c4c4" stroke-width="1" stroke-dasharray="3 3"/><line x1="473.5" y1="858" x2="473.5" y2="900" stroke="#c4c4c4" stroke-width="1" stroke-dasharray="3 3"/><line x1="593.5" y1="858" x2="593.5" y2="900" stroke="#c4c4c4" stroke-width="1" stroke-dasharray="3 3"/><line x1="713.5" y1="858" x2="713.5" y2="900" stroke="#c4c4c4" stroke-width="1" stroke-dasharray="3 3"/><line x1="833.5" y1="858" x2="833.5" y2="900" stroke="#c4c4c4" stroke-width="1" stroke-dasharray="3 3"/><line x1="953.5" y1="858" x2="953.5" y2="900" stroke="#c4c4c4" stroke-width="1" stroke-dasharray="3 3"/><line x1="1073.5" y1="858" x2="1073.5" y2="900" stroke="#c4c4c4" stroke-width="1" stroke-dasharray="3 3"/><line x1="1193.5" y1="858" x2="1193.5" y2="900" stroke="#c4c4c4" stroke-width="1" stroke-dasharray="3 3"/><line x1="1313.5" y1="858" x2="1313.5" y2="900" stroke="#c4c4c4" stroke-width="1" stroke-dasharray="3 3"/><line x1="1433.5" y1="858" x2="1433.5" y2="900" stroke="#c4c4c4" stroke-width="1" stroke-dasharray="3 3"/><line x1="1553.5" y1="858" x2="1553.5" y2="900" stroke="#c4c4c4" stroke-width="1" stroke-dasharray="3 3"/><path d="M233.6 896 L246 903" stroke="#9AD62E" stroke-width="2.2" fill="none"/><circle cx="233.6" cy="896" r="3.5" fill="#fff" stroke="#9AD62E" stroke-width="1.8"/></svg>
<svg style="left:1590px;top:0" width="10" height="660" viewBox="1590 0 10 660"><defs><linearGradient id="sbg" x1="0" x2="1" y1="0" y2="0"><stop offset="0" stop-color="#d9d9d9"/><stop offset="1" stop-color="#e2e2e2"/></linearGradient></defs><rect x="1594.1" y="-8" width="7" height="663" rx="3" fill="url(#sbg)"/></svg>
<svg style="left:1576px;top:98px" width="20" height="28" viewBox="1576 98 20 28"><rect x="1582.2" y="104.2" width="5.6" height="5.6" fill="none" stroke="rgba(255,255,255,.7)" stroke-width="1.2"/><g fill="#111"><path d="M1584.9 100.2 L1587.7 103.2 H1582.1 Z"/><path d="M1584.9 113.6 L1587.7 110.9 H1582.1 Z"/><path d="M1578.4 107 L1581.3 104.3 V109.7 Z"/><path d="M1591.5 107 L1588.7 104.3 V109.7 Z"/></g><path d="M1585.5 114.2 V123.4 L1587.6 121.6 L1589.2 124.8 L1590.6 124.2 L1589.2 121.2 L1592.6 121 Z" fill="#fff" stroke="#b8b8b8" stroke-width=".7" stroke-linejoin="round"/></svg>
</body></html>
